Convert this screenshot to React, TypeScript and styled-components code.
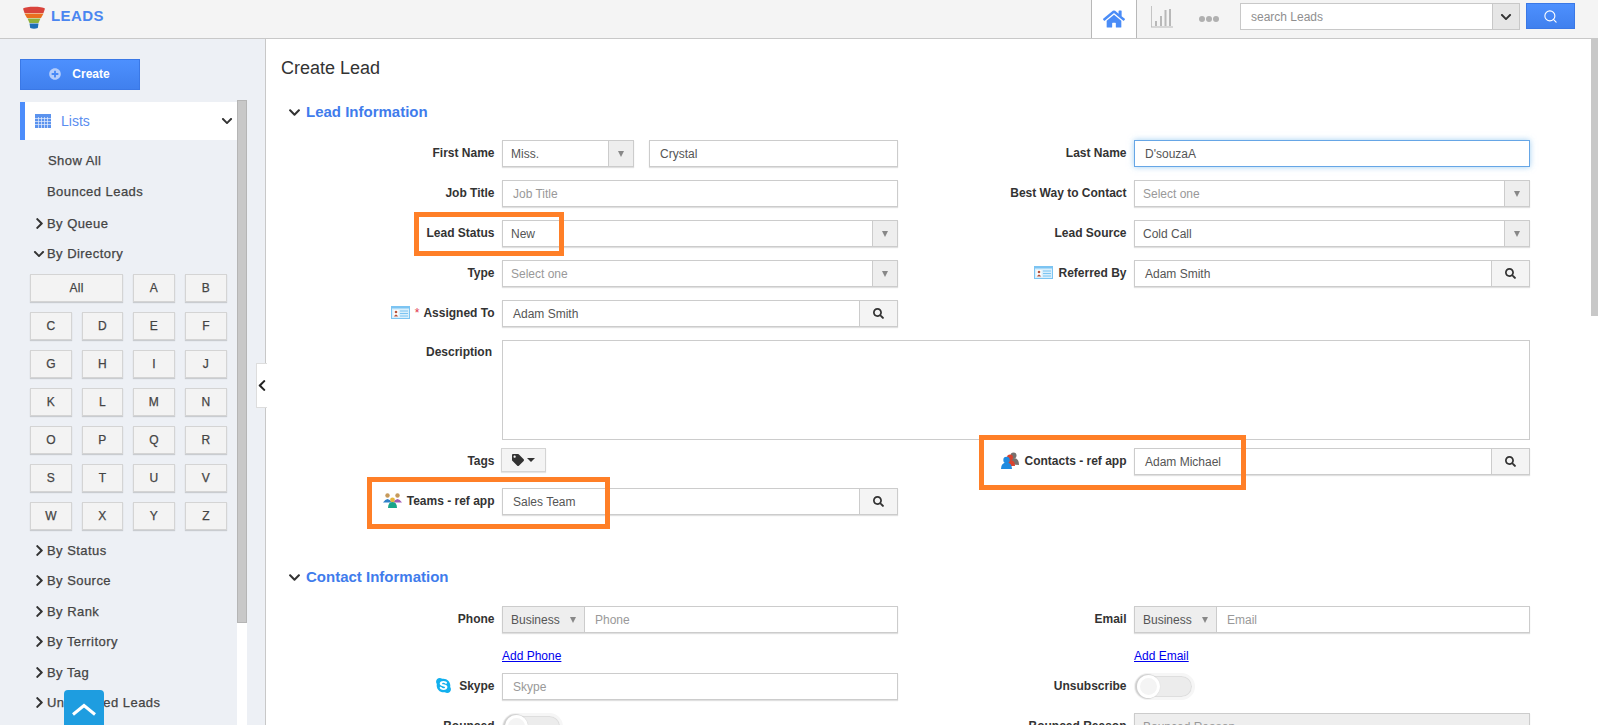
import { ReactNode } from 'react';
import styled, { createGlobalStyle } from 'styled-components';
import { FaChevronDown, FaChevronLeft, FaChevronRight, FaHome, FaPlusCircle, FaSearch, FaSkype, FaTag } from 'react-icons/fa';
import { Search } from 'lucide-react';

const GlobalStyle = createGlobalStyle`
  html, body {
    margin: 0;
    height: 725px;
    overflow: hidden;
    background: #fff;
    font-family: "Liberation Sans", Arial, sans-serif;
    font-size: 12px;
    color: #333;
  }
  * { box-sizing: border-box; }
`

const letters = 'ABCDEFGHIJKLMNOPQRSTUVWXYZ'.split('');

function LogoIcon() {
  return (
    <svg width="22" height="23" viewBox="0 0 22 23">
      <path d="M0 2.5C3 0 19 0 22 2.5L20.5 7H1.5Z" fill="#d9433b" />
      <path d="M1.5 7.5H20.5L18 12H4Z" fill="#ea6f1f" />
      <path d="M4.5 12.5H17.5L15.5 17H6.5Z" fill="#8fb13c" />
      <path d="M6.5 17.5H15.5L14.8 22Q11 23.5 7.2 22Z" fill="#1f6fb5" />
    </svg>
  )
}

function ChartIcon() {
  return (
    <svg width="22" height="22" viewBox="0 0 22 22" fill="#b8b8b8">
      <path d="M0 0H0.8V20.5H22V21.5H0Z" />
      <rect x="4" y="15" width="2" height="5" />
      <rect x="9" y="10" width="2" height="10" />
      <rect x="13.5" y="4" width="2" height="16" />
      <rect x="18" y="3" width="2" height="17" />
    </svg>
  )
}

function TableIcon() {
  return (
    <svg width="16" height="14" viewBox="0 0 16 14">
      <rect width="16" height="14" fill="#5b93ee" />
      <path d="M0 4.5H16M0 7.5H16M0 10.5H16M3.5 3V14M6.5 3V14M9.5 3V14M12.5 3V14" stroke="#fff" strokeWidth="0.7" opacity="0.85" />
    </svg>
  )
}

function CardIcon() {
  return (
    <svg width="19" height="13" viewBox="0 0 19 13">
      <rect width="19" height="13" fill="#7cc4f2" />
      <rect x="1" y="2.5" width="17" height="9.5" fill="#d9effc" />
      <rect x="2.5" y="4" width="5" height="6.5" fill="#fff" />
      <circle cx="5" cy="6" r="1.3" fill="#b5533c" />
      <path d="M3 10.5Q5 6.5 7 10.5Z" fill="#b5533c" />
      <path d="M9 5H17M9 7.5H17M9 10H17" stroke="#7cc4f2" />
    </svg>
  )
}

function TeamsIcon() {
  return (
    <svg width="19" height="15" viewBox="0 0 19 15">
      <circle cx="4.5" cy="2.5" r="2.2" fill="#c79a5b" />
      <path d="M0 9.5Q4.5 2.5 9 9.5Z" fill="#2f80c9" />
      <circle cx="14.5" cy="2.5" r="2.2" fill="#c79a5b" />
      <path d="M10 9.5Q14.5 2.5 19 9.5Z" fill="#a05cb5" />
      <circle cx="9.5" cy="7" r="2.4" fill="#e5b53f" />
      <path d="M5 15Q5 9 9.5 9Q14 9 14 15Z" fill="#19a58a" />
    </svg>
  )
}

function ContactsIcon() {
  return (
    <svg width="18" height="17" viewBox="0 0 18 17">
      <circle cx="12.5" cy="3.5" r="3" fill="#77716e" />
      <path d="M8 12Q8 6 12.5 6Q18 6 18 13Z" fill="#77716e" />
      <circle cx="9" cy="5.5" r="3" fill="#d9432f" />
      <path d="M5 14Q5 8 9 8Q14 8 14 14Z" fill="#d9432f" />
      <circle cx="5.5" cy="8" r="3.2" fill="#1f8be0" />
      <path d="M0 17Q0 10.5 5.5 10.5Q11 10.5 11 17Z" fill="#1f8be0" />
    </svg>
  )
}

function UpChevron() {
  return (
    <svg width="24" height="13" viewBox="0 0 24 13" fill="none" stroke="#fff" strokeWidth="3">
      <path d="M1 11.5L12 2.5L23 11.5" />
    </svg>
  )
}

function Select({ value, placeholder, width }: { value?: string; placeholder?: string; width?: string }) {
  return (
    <Box $width={width}>
      <SelectText $muted={!value}>{value || placeholder}</SelectText>
      <ArrowCell><Caret /></ArrowCell>
    </Box>
  )
}

function Lookup({ value }: { value: string }) {
  return (
    <Box>
      <InputText>{value}</InputText>
      <SearchCell><FaSearch size={11} /></SearchCell>
    </Box>
  )
}

function TypedInput({ placeholder }: { placeholder: string }) {
  return (
    <Box>
      <TypeCell>Business<Caret /></TypeCell>
      <InputText $muted>{placeholder}</InputText>
    </Box>
  )
}

function Field({ label, icon, required, children, top }: { label?: string; icon?: ReactNode; required?: boolean; children?: ReactNode; top?: boolean }) {
  return (
    <FieldWrap>
      <Label $top={top}>
        {icon}
        {required && <Required>*</Required>}
        {label}
      </Label>
      {children}
    </FieldWrap>
  )
}

function App() {
  return (
    <Page>
      <GlobalStyle />
      <Header>
        <Logo>
          <LogoIcon />
          <LogoText>LEADS</LogoText>
        </Logo>
        <HeaderTools>
          <HomeTab><FaHome size={22} color="#4a8cf7" /></HomeTab>
          <ChartSlot><ChartIcon /></ChartSlot>
          <Dots><Dot /><Dot /><Dot /></Dots>
          <SearchBox>
            <SearchText>search Leads</SearchText>
            <SearchDrop><FaChevronDown size={12} color="#333" /></SearchDrop>
          </SearchBox>
          <SearchButton><Search size={15} color="#fff" strokeWidth={1.8} /></SearchButton>
        </HeaderTools>
      </Header>
      <Body>
        <Sidebar>
          <CreateButton><FaPlusCircle size={12} color="#b4cdfb" />Create</CreateButton>
          <SideBody>
            <Nav>
              <ListsRow>
                <TableIcon />
                <ListsText>Lists</ListsText>
                <FaChevronDown size={12} color="#333" />
              </ListsRow>
              <LinkItem>Show All</LinkItem>
              <LinkItem $flush>Bounced Leads</LinkItem>
              <NavItem><FaChevronRight size={13} color="#333" />By Queue</NavItem>
              <NavItem $open><FaChevronDown size={12} color="#333" />By Directory</NavItem>
              <LetterGrid>
                <LetterButton $wide>All</LetterButton>
                {letters.map((l) => <LetterButton key={l}>{l}</LetterButton>)}
              </LetterGrid>
              <NavItem><FaChevronRight size={13} color="#333" />By Status</NavItem>
              <NavItem><FaChevronRight size={13} color="#333" />By Source</NavItem>
              <NavItem><FaChevronRight size={13} color="#333" />By Rank</NavItem>
              <NavItem><FaChevronRight size={13} color="#333" />By Territory</NavItem>
              <NavItem><FaChevronRight size={13} color="#333" />By Tag</NavItem>
              <NavItem><FaChevronRight size={13} color="#333" />Unattended Leads</NavItem>
            </Nav>
            <SideTrack><SideThumb /></SideTrack>
          </SideBody>
          <CollapseTab><FaChevronLeft size={13} color="#222" /></CollapseTab>
          <UpButton><UpChevron /></UpButton>
        </Sidebar>
        <Main>
          <Content>
            <Title>Create Lead</Title>
            <SectionHead><FaChevronDown size={13} color="#333" />Lead Information</SectionHead>

            <Row>
              <Field label="First Name">
                <Pair>
                  <Select value="Miss." width="132px" />
                  <Box><InputText>Crystal</InputText></Box>
                </Pair>
              </Field>
              <Field label="Last Name">
                <Box $focus><InputText>D'souzaA</InputText></Box>
              </Field>
            </Row>
            <Row>
              <Field label="Job Title">
                <Box><InputText $muted>Job Title</InputText></Box>
              </Field>
              <Field label="Best Way to Contact">
                <Select placeholder="Select one" />
              </Field>
            </Row>
            <Row>
              <Field label="Lead Status">
                <Select value="New" />
                <Callout $left={148} $top={-8} $width={150} $height={44} />
              </Field>
              <Field label="Lead Source">
                <Select value="Cold Call" />
              </Field>
            </Row>
            <Row>
              <Field label="Type">
                <Select placeholder="Select one" />
              </Field>
              <Field label="Referred By" icon={<CardIcon />}>
                <Lookup value="Adam Smith" />
              </Field>
            </Row>
            <Row>
              <Field label="Assigned To" icon={<CardIcon />} required>
                <Lookup value="Adam Smith" />
              </Field>
            </Row>
            <DescriptionRow>
              <Label $top>Description</Label>
              <TextArea />
            </DescriptionRow>
            <Row>
              <Field label="Tags">
                <TagsButton><FaTag size={12} color="#333" /><SmallCaret /></TagsButton>
              </Field>
              <Field label="Contacts - ref app" icon={<ContactsIcon />}>
                <Lookup value="Adam Michael" />
                <Callout $left={81} $top={-13} $width={267} $height={55} />
              </Field>
            </Row>
            <Row>
              <Field label="Teams - ref app" icon={<TeamsIcon />}>
                <Lookup value="Sales Team" />
                <Callout $left={101} $top={-11} $width={243} $height={52} />
              </Field>
            </Row>

            <SectionHead $contact><FaChevronDown size={13} color="#333" />Contact Information</SectionHead>

            <Row>
              <Field label="Phone"><TypedInput placeholder="Phone" /></Field>
              <Field label="Email"><TypedInput placeholder="Email" /></Field>
            </Row>
            <LinkRow>
              <AddLink>Add Phone</AddLink>
              <AddLink>Add Email</AddLink>
            </LinkRow>
            <Row>
              <Field label="Skype" icon={<SkypeSlot><FaSkype size={17} color="#12b0ee" /></SkypeSlot>}>
                <Box><InputText $muted>Skype</InputText></Box>
              </Field>
              <Field label="Unsubscribe"><Toggle><Knob /></Toggle></Field>
            </Row>
            <Row>
              <Field label="Bounced"><Toggle><Knob /></Toggle></Field>
              <Field label="Bounced Reason">
                <Box $disabled><SelectText $muted>Bounced Reason</SelectText></Box>
              </Field>
            </Row>
          </Content>
          <PageTrack><PageThumb /></PageTrack>
        </Main>
      </Body>
    </Page>
  );
}

const Page = styled.div`
  width: 1598px;
  height: 725px;
  overflow: hidden;
  display: flex;
  flex-direction: column;
`

const Header = styled.header`
  height: 39px;
  flex: none;
  display: flex;
  align-items: flex-start;
  justify-content: space-between;
  background: #f4f4f4;
  border-bottom: 1px solid #c8c8c8;
  padding: 0 23px 0 23px;
`

const Logo = styled.div`
  display: flex;
  align-items: flex-start;
  gap: 6px;
  padding-top: 6px;
`

const LogoText = styled.span`
  font-size: 15px;
  font-weight: bold;
  color: #4a86f0;
  line-height: 20px;
  letter-spacing: 0.4px;
`

const HeaderTools = styled.div`
  display: flex;
  align-items: flex-start;
`

const HomeTab = styled.div`
  width: 46px;
  height: 38px;
  background: #fff;
  border-left: 1px solid #b8b8b8;
  border-right: 1px solid #b8b8b8;
  display: flex;
  align-items: center;
  justify-content: center;
`

const ChartSlot = styled.div`
  width: 47px;
  height: 38px;
  padding: 6px 0 0 14px;
`

const Dots = styled.div`
  width: 56px;
  height: 38px;
  display: flex;
  align-items: center;
  gap: 1px;
  padding-left: 15px;
`

const Dot = styled.span`
  width: 6px;
  height: 6px;
  border-radius: 50%;
  background: #b0b0b0;
`

const SearchBox = styled.div`
  width: 280px;
  height: 27px;
  margin-top: 3px;
  display: flex;
  background: #fff;
  border: 1px solid #c8c8c8;
`

const SearchText = styled.span`
  flex: 1;
  line-height: 27px;
  padding-left: 10px;
  color: #8f8f8f;
`

const SearchDrop = styled.span`
  width: 27px;
  background: #e6e6e6;
  border-left: 1px solid #c8c8c8;
  display: flex;
  align-items: center;
  justify-content: center;
`

const SearchButton = styled.button`
  width: 49px;
  height: 26px;
  margin: 3px 0 0 6px;
  padding: 0;
  border: 1px solid #3a78e6;
  background: linear-gradient(#4d90fe, #4080ee);
  display: flex;
  align-items: center;
  justify-content: center;
`

const Body = styled.div`
  flex: 1;
  display: flex;
  min-height: 0;
`

const Sidebar = styled.aside`
  position: relative;
  width: 266px;
  flex: none;
  display: flex;
  flex-direction: column;
  background: #edf0f5;
  border-right: 1px solid #c8c8c8;
  padding-top: 20px;
`

const CreateButton = styled.button`
  width: 120px;
  height: 31px;
  margin-left: 20px;
  flex: none;
  padding: 0 1px 2px 0;
  display: flex;
  align-items: center;
  justify-content: center;
  gap: 11px;
  border: 1px solid #3a78e6;
  background: linear-gradient(#4d90fe, #4080ee);
  color: #fff;
  font: bold 12px "Liberation Sans", Arial, sans-serif;
`

const SideBody = styled.div`
  flex: 1;
  min-height: 0;
  display: flex;
  margin-top: 10px;
`

const Nav = styled.nav`
  width: 217px;
  margin-left: 20px;
  padding-top: 2px;
`

const ListsRow = styled.div`
  height: 38px;
  margin-bottom: 4px;
  display: flex;
  align-items: center;
  background: #fff;
  border-left: 5px solid #4c8dfb;
  padding: 0 4px 0 10px;
`

const ListsText = styled.span`
  flex: 1;
  margin-left: 10px;
  font-size: 14px;
  color: #5a8df0;
`

const LinkItem = styled.div<{ $flush?: boolean }>`
  height: 32px;
  padding: ${(p) => (p.$flush ? '0' : '1px')} 0 0 ${(p) => (p.$flush ? '27px' : '28px')};
  line-height: 32px;
  font-size: 13px;
  letter-spacing: 0.45px;
  -webkit-text-stroke: 0.25px #444;
  color: #444;
`

const NavItem = styled.div<{ $open?: boolean }>`
  height: 30.5px;
  display: flex;
  align-items: center;
  gap: ${(p) => (p.$open ? '2px' : '1px')};
  padding-left: 13px;
  font-size: 13px;
  letter-spacing: 0.45px;
  -webkit-text-stroke: 0.25px #444;
  color: #444;
`

const LetterGrid = styled.div`
  display: grid;
  grid-template-columns: 42px 41px 42px 42px;
  grid-auto-rows: 28px;
  gap: 10px;
  margin: 5px 0 5px 10px;
`

const LetterButton = styled.div<{ $wide?: boolean }>`
  grid-column: ${(p) => (p.$wide ? 'span 2' : 'auto')};
  display: flex;
  align-items: center;
  justify-content: center;
  background: #f3f3f3;
  border: 1px solid #d4d4d4;
  box-shadow: 0 1px 1px rgba(0, 0, 0, 0.15);
  letter-spacing: 0.3px;
  -webkit-text-stroke: 0.25px #444;
  color: #444;
`

const SideTrack = styled.div`
  width: 10px;
  background: #fff;
`

const SideThumb = styled.div`
  height: 523px;
  background: #c8c8c8;
  border: 1px solid #b5b5b5;
`

const CollapseTab = styled.div`
  position: absolute;
  left: 256px;
  top: 324px;
  width: 11px;
  height: 45px;
  display: flex;
  align-items: center;
  justify-content: center;
  background: #fff;
  border: 1px solid #ddd;
  border-right: none;
`

const UpButton = styled.div`
  position: absolute;
  left: 64px;
  top: 651px;
  width: 40px;
  height: 40px;
  display: flex;
  justify-content: center;
  padding-top: 13px;
  background: #1e9de0;
  border-radius: 4px 4px 0 0;
`

const Main = styled.main`
  flex: 1;
  display: flex;
  min-width: 0;
`

const Content = styled.div`
  flex: 1;
  min-width: 0;
  padding-top: 18px;
`

const PageTrack = styled.div`
  width: 7px;
  flex: none;
`

const PageThumb = styled.div`
  height: 277px;
  background: #c8c8c8;
`

const Title = styled.h1`
  margin: 0 0 23px 15px;
  font-size: 18px;
  font-weight: normal;
  line-height: 22px;
  color: #333;
`

const SectionHead = styled.h2<{ $contact?: boolean }>`
  margin: ${(p) => (p.$contact ? '52px' : '0')} 0 ${(p) => (p.$contact ? '19px' : '18px')} 0;
  padding-left: 22px;
  display: flex;
  align-items: center;
  gap: 5px;
  font-size: 15px;
  font-weight: bold;
  line-height: 20px;
  color: #3f7cec;
`

const Row = styled.div`
  display: grid;
  grid-template-columns: 632px 632px;
  margin-bottom: 13px;
`

const DescriptionRow = styled.div`
  display: grid;
  grid-template-columns: 228px 1028px;
  column-gap: 8px;
  margin-bottom: 8px;
`

const LinkRow = styled.div`
  display: grid;
  grid-template-columns: 632px 632px;
  margin: 15px 0 9px;
  padding-left: 236px;
  line-height: 16px;
`

const FieldWrap = styled.div`
  position: relative;
  display: grid;
  grid-template-columns: 228px 396px;
  column-gap: 8px;
  min-height: 24px;
`

const Label = styled.label<{ $top?: boolean }>`
  display: flex;
  align-items: ${(p) => (p.$top ? 'flex-start' : 'center')};
  justify-content: flex-end;
  gap: 5px;
  height: ${(p) => (p.$top ? 'auto' : '25px')};
  margin-right: ${(p) => (p.$top ? '2px' : '-0.5px')};
  padding-top: ${(p) => (p.$top ? '5px' : '0')};
  font-size: 12px;
  font-weight: bold;
  color: #333;
`

const Required = styled.span`
  color: #e0344b;
  font-weight: normal;
  margin-right: -1px;
`

const Box = styled.div<{ $width?: string; $focus?: boolean; $disabled?: boolean }>`
  width: ${(p) => p.$width || '100%'};
  flex: ${(p) => (p.$width ? 'none' : '1')};
  height: 27px;
  display: flex;
  background: ${(p) => (p.$disabled ? '#eee' : '#fff')};
  border: 1px solid ${(p) => (p.$focus ? '#66a6e6' : '#ccc')};
  box-shadow: ${(p) => (p.$focus ? '0 0 6px rgba(102, 175, 233, 0.6)' : '0 1px 1px rgba(0, 0, 0, 0.12)')};
`

const Pair = styled.div`
  display: flex;
  gap: 15px;
`

const SelectText = styled.span<{ $muted?: boolean }>`
  flex: 1;
  padding-left: 8px;
  line-height: 27px;
  color: ${(p) => (p.$muted ? '#999' : '#555')};
`

const InputText = styled.span<{ $muted?: boolean }>`
  flex: 1;
  padding-left: 10px;
  line-height: 27px;
  color: ${(p) => (p.$muted ? '#999' : '#555')};
`

const ArrowCell = styled.span`
  width: 25px;
  flex: none;
  display: flex;
  align-items: center;
  justify-content: center;
  background: #eee;
  border-left: 1px solid #ccc;
`

const Caret = styled.span`
  width: 0;
  height: 0;
  border-left: 3.5px solid transparent;
  border-right: 3.5px solid transparent;
  border-top: 6px solid #888;
`

const SmallCaret = styled.span`
  width: 0;
  height: 0;
  border-left: 4px solid transparent;
  border-right: 4px solid transparent;
  border-top: 4px solid #333;
`

const SearchCell = styled.span`
  width: 38px;
  flex: none;
  display: flex;
  align-items: center;
  justify-content: center;
  background: #f4f4f4;
  border-left: 1px solid #ccc;
  color: #333;
`

const TypeCell = styled.span`
  width: 82px;
  flex: none;
  display: flex;
  align-items: center;
  justify-content: space-between;
  padding: 0 8px;
  background: #eee;
  border-right: 1px solid #ccc;
  color: #555;
`

const TextArea = styled.div`
  height: 100px;
  background: #fff;
  border: 1px solid #ccc;
`

const TagsButton = styled.button`
  width: 45px;
  height: 24px;
  margin-left: -1px;
  padding: 0;
  display: flex;
  align-items: center;
  justify-content: center;
  gap: 3px;
  background: #f4f4f4;
  border: 1px solid #d4d4d4;
  box-shadow: 0 1px 1px rgba(0, 0, 0, 0.1);
`

const AddLink = styled.a`
  color: #0000ee;
  text-decoration: underline;
`

const SkypeSlot = styled.span`
  display: flex;
  margin-right: 2px;
`

const Toggle = styled.div`
  position: relative;
  width: 61px;
  height: 27px;
  background: #ececec;
  border: 3px solid #f6f6f6;
  border-radius: 14px;
  box-shadow: inset 0 0 0 1px #dedede;
`

const Knob = styled.span`
  position: absolute;
  left: 0;
  top: -1px;
  width: 23px;
  height: 23px;
  border-radius: 50%;
  background: #f4f4f4;
  border: 3px solid #fff;
  box-shadow: -1px 0 1px 1px #cfcfcf;
`

const Callout = styled.div<{ $left: number; $top: number; $width: number; $height: number }>`
  position: absolute;
  left: ${(p) => p.$left}px;
  top: ${(p) => p.$top}px;
  width: ${(p) => p.$width}px;
  height: ${(p) => p.$height}px;
  border: 5px solid #ff7f27;
  pointer-events: none;
`

export default App;
